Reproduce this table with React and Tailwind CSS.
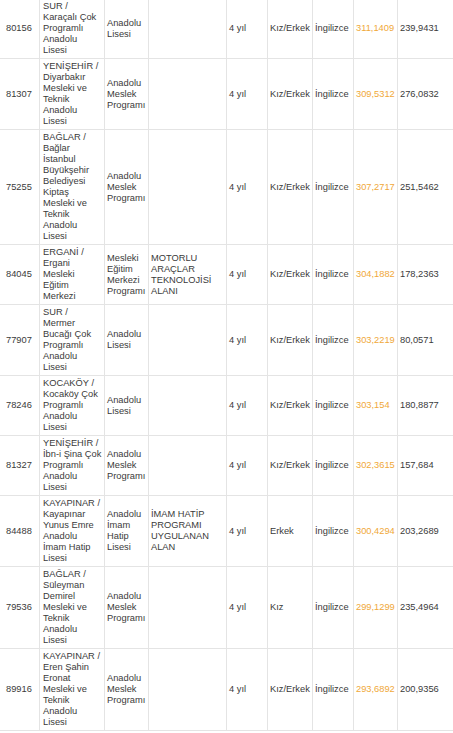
const rows = [
  {
    id: '80156',
    school: ['SUR /', 'Karaçalı Çok', 'Programlı', 'Anadolu', 'Lisesi'],
    type: ['Anadolu', 'Lisesi'],
    field: [],
    gender: 'Kız/Erkek',
    max: '311,1409',
    min: '239,9431',
  },
  {
    id: '81307',
    school: ['YENİŞEHİR /', 'Diyarbakır', 'Mesleki ve', 'Teknik', 'Anadolu', 'Lisesi'],
    type: ['Anadolu', 'Meslek', 'Programı'],
    field: [],
    gender: 'Kız/Erkek',
    max: '309,5312',
    min: '276,0832',
  },
  {
    id: '75255',
    school: ['BAĞLAR /', 'Bağlar', 'İstanbul', 'Büyükşehir', 'Belediyesi', 'Kiptaş', 'Mesleki ve', 'Teknik', 'Anadolu', 'Lisesi'],
    type: ['Anadolu', 'Meslek', 'Programı'],
    field: [],
    gender: 'Kız/Erkek',
    max: '307,2717',
    min: '251,5462',
  },
  {
    id: '84045',
    school: ['ERGANİ /', 'Ergani', 'Mesleki', 'Eğitim', 'Merkezi'],
    type: ['Mesleki', 'Eğitim', 'Merkezi', 'Programı'],
    field: ['MOTORLU', 'ARAÇLAR', 'TEKNOLOJİSİ', 'ALANI'],
    gender: 'Kız/Erkek',
    max: '304,1882',
    min: '178,2363',
  },
  {
    id: '77907',
    school: ['SUR /', 'Mermer', 'Bucağı Çok', 'Programlı', 'Anadolu', 'Lisesi'],
    type: ['Anadolu', 'Lisesi'],
    field: [],
    gender: 'Kız/Erkek',
    max: '303,2219',
    min: '80,0571',
  },
  {
    id: '78246',
    school: ['KOCAKÖY /', 'Kocaköy Çok', 'Programlı', 'Anadolu', 'Lisesi'],
    type: ['Anadolu', 'Lisesi'],
    field: [],
    gender: 'Kız/Erkek',
    max: '303,154',
    min: '180,8877',
  },
  {
    id: '81327',
    school: ['YENİŞEHİR /', 'İbn-i Şina Çok', 'Programlı', 'Anadolu', 'Lisesi'],
    type: ['Anadolu', 'Meslek', 'Programı'],
    field: [],
    gender: 'Kız/Erkek',
    max: '302,3615',
    min: '157,684',
  },
  {
    id: '84488',
    school: ['KAYAPINAR /', 'Kayapınar', 'Yunus Emre', 'Anadolu', 'İmam Hatip', 'Lisesi'],
    type: ['Anadolu', 'İmam', 'Hatip', 'Lisesi'],
    field: ['İMAM HATİP', 'PROGRAMI', 'UYGULANAN', 'ALAN'],
    gender: 'Erkek',
    max: '300,4294',
    min: '203,2689',
  },
  {
    id: '79536',
    school: ['BAĞLAR /', 'Süleyman', 'Demirel', 'Mesleki ve', 'Teknik', 'Anadolu', 'Lisesi'],
    type: ['Anadolu', 'Meslek', 'Programı'],
    field: [],
    gender: 'Kız',
    max: '299,1299',
    min: '235,4964',
  },
  {
    id: '89916',
    school: ['KAYAPINAR /', 'Eren Şahin', 'Eronat', 'Mesleki ve', 'Teknik', 'Anadolu', 'Lisesi'],
    type: ['Anadolu', 'Meslek', 'Programı'],
    field: [],
    gender: 'Kız/Erkek',
    max: '293,6892',
    min: '200,9356',
  },
]

function Lines({ lines }) {
  return (
    <div>
      {lines.map((l, i) => (
        <div key={i} className="whitespace-nowrap">{l}</div>
      ))}
    </div>
  )
}

const cell = 'flex items-center border-b border-r border-[#e4e4e4] py-[2px] pl-[2px] pr-[2px]'

export default function App() {
  return (
    <div className="min-h-screen bg-white overflow-hidden">
      <div
        className="-mt-px grid grid-cols-[40px_65px_44px_78px_41px_45px_41px_44px_1fr] text-[9.3px] leading-[11px] text-[#3a3a3a]"
        style={{ fontFamily: '"Liberation Sans", Arial, sans-serif' }}
      >
        {rows.map((r) => (
          <div key={r.id} className="contents">
            <div className={`${cell} pl-[6px]`}>{r.id}</div>
            <div className={`${cell} pl-[3px]`}>
              <Lines lines={r.school} />
            </div>
            <div className={`${cell} pl-[2px]`}>
              <Lines lines={r.type} />
            </div>
            <div className={`${cell} pl-[2px]`}>
              <Lines lines={r.field} />
            </div>
            <div className={`${cell} pl-[2px]`}>4 yıl</div>
            <div className={`${cell} pl-[1px]`}>{r.gender}</div>
            <div className={`${cell} pl-[2px]`}>İngilizce</div>
            <div className={`${cell} pl-[2px] text-[#f0a838]`}>{r.max}</div>
            <div className="flex items-center border-b border-[#e4e4e4] py-[2px] pl-[2px]">{r.min}</div>
          </div>
        ))}
      </div>
    </div>
  )
}
